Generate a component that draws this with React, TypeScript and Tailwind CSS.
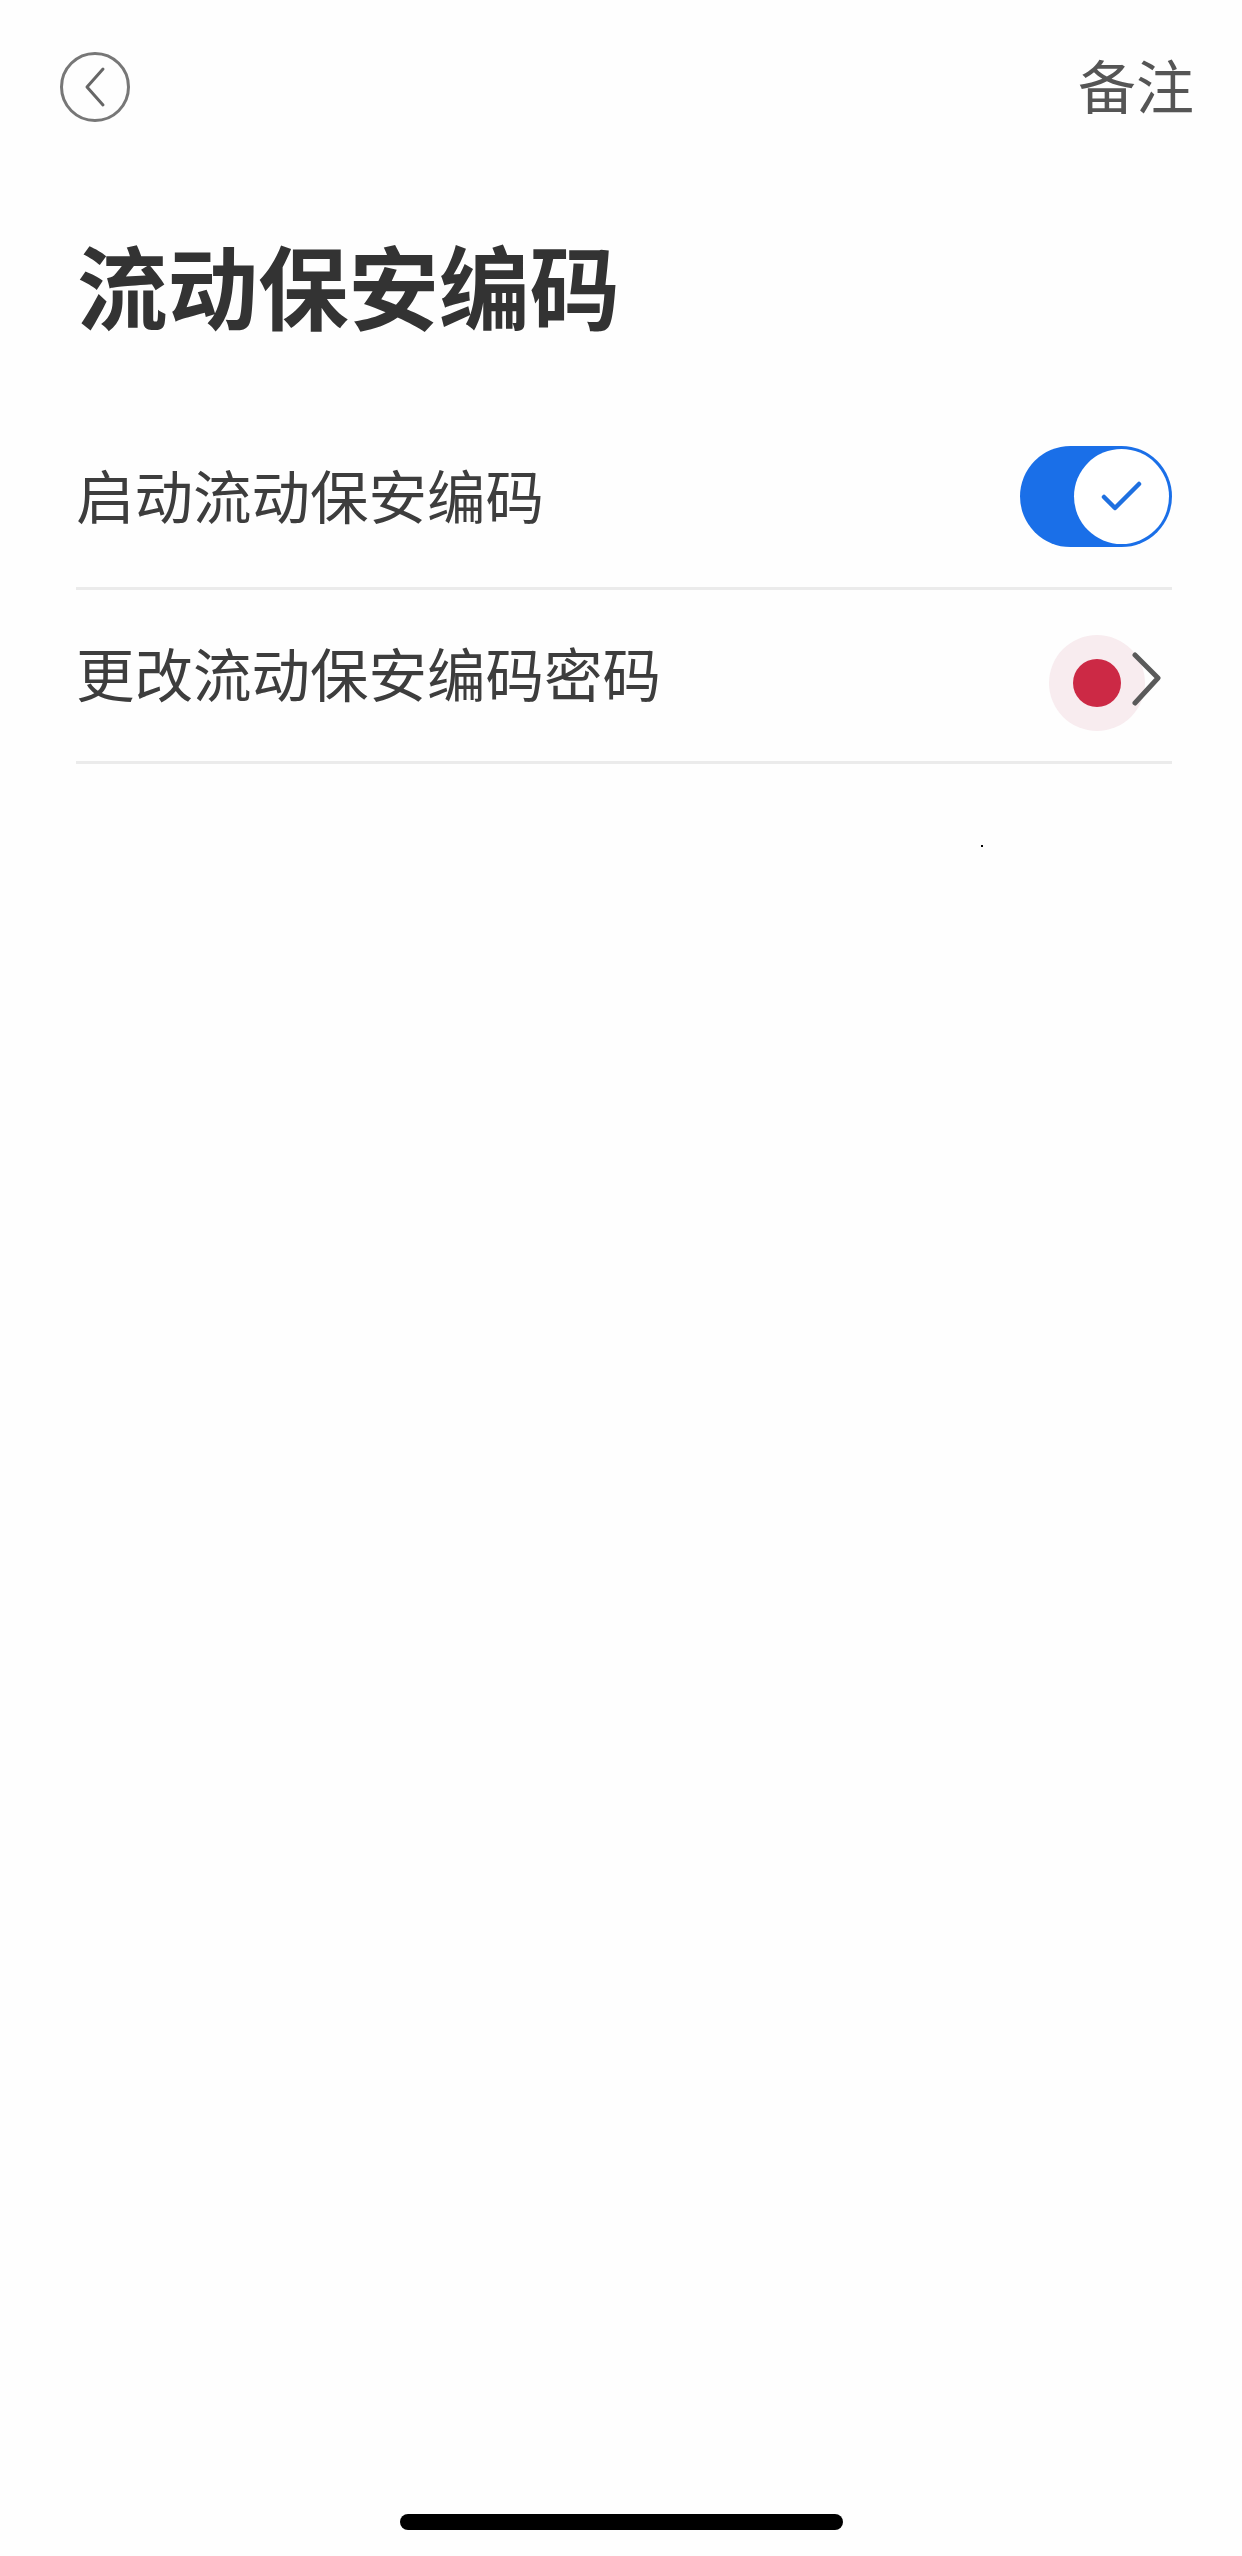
const cjk = "font-['Noto_Sans_CJK_SC','Noto_Sans',sans-serif]";

function BackButton() {
  return (
    <button className="flex h-[70px] w-[70px] items-center justify-center rounded-full border-[3px] border-[#777777]">
      <svg width="26" height="42" viewBox="0 0 26 42" fill="none" aria-hidden="true">
        <path d="M21 3 L5 21 L21 39" stroke="#666666" strokeWidth="3" strokeLinecap="round" strokeLinejoin="round" />
      </svg>
    </button>
  );
}

function Toggle() {
  return (
    <div className="flex h-[101px] w-[152px] items-center justify-end rounded-full bg-[#1a6fe8] pr-[3px]">
      <div className="flex h-[95px] w-[95px] items-center justify-center rounded-full bg-white">
        <svg width="41" height="31" viewBox="0 0 41 31" fill="none" aria-hidden="true">
          <path d="M3 16 L14 27 L38 3" stroke="#1f70e0" strokeWidth="4.5" strokeLinecap="round" strokeLinejoin="round" />
        </svg>
      </div>
    </div>
  );
}

function Badge() {
  return (
    <div className="flex items-center">
      <div className="flex h-[96px] w-[96px] items-center justify-center rounded-full bg-[#f8ecef]">
        <div className="h-[48px] w-[48px] rounded-full bg-[#cc2945]" />
      </div>
      <svg className="ml-[-14px] mt-[-8px]" width="32" height="54" viewBox="0 0 32 54" fill="none" aria-hidden="true">
        <path d="M4 3 L27 26 L4 51" stroke="#5a5a5a" strokeWidth="5" strokeLinecap="round" strokeLinejoin="round" />
      </svg>
    </div>
  );
}

export default function App() {
  return (
    <div className={`${cjk} relative flex h-[2556px] w-[1242px] flex-col bg-[#fefefe]`}>
      <header className="flex items-center justify-between pl-[60px] pr-[48px] pt-[52px]">
        <BackButton />
        <span className="mt-[-6px] text-[58px] leading-[70px] text-[#555555]">备注</span>
      </header>

      <h1 className="ml-[77px] mt-[107px] text-[90.5px] leading-[110px] font-bold text-[#333333]">流动保安编码</h1>

      <section className="ml-[76px] mr-[70px] mt-[61px] flex flex-col">
        <div className="flex h-[190px] items-center justify-between border-b-[3px] border-[#ebebeb]">
          <span className="text-[58.5px] leading-[80px] text-[#3d3d3d]">启动流动保安编码</span>
          <div className="mt-[6px]">
            <Toggle />
          </div>
        </div>
        <div className="flex h-[174px] items-center justify-between border-b-[3px] border-[#ebebeb] pb-[8px]">
          <span className="text-[58.5px] leading-[80px] text-[#3d3d3d]">更改流动保安编码密码</span>
          <div className="mr-[9px] mt-[22px]">
            <Badge />
          </div>
        </div>
      </section>

      {/* stray speck in the screenshot */}
      <div className="absolute left-[981px] top-[845px] h-[2px] w-[2px] bg-black" />

      <div className="mt-auto mb-[26px] flex justify-center">
        <div className="h-[16px] w-[443px] rounded-full bg-black" />
      </div>
    </div>
  );
}
